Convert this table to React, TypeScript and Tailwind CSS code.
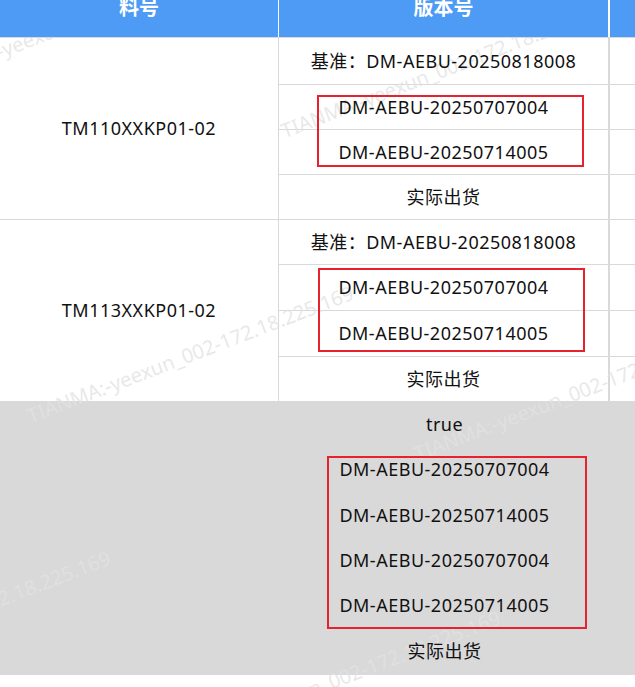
import React from "react";

const WM = "TIANMA:-yeexun_002-172.18.225.169";

function Watermark({ x, y }: { x: number; y: number }) {
  return (
    <span
      className="absolute z-[5] whitespace-nowrap text-[20px] leading-[24px] tracking-normal font-normal text-[rgba(226,226,226,0.79)] origin-left pointer-events-none"
      style={{ left: x, top: y - 12, transform: "rotate(-21deg)" }}
    >
      {WM}
    </span>
  );
}

function Box({ l, t, w, h }: { l: number; t: number; w: number; h: number }) {
  return (
    <div
      className="absolute z-10 border-2 border-[#e8212e] pointer-events-none"
      style={{ left: l, top: t, width: w, height: h }}
    />
  );
}

const T = ({ children }: { children: React.ReactNode }) => (
  <span className="relative z-10 whitespace-nowrap">{children}</span>
);

export default function App() {
  return (
    <div className="relative w-[635px] h-[687px] overflow-hidden bg-white font-['Noto_Sans','Noto_Sans_CJK_SC',sans-serif] text-[18px] tracking-[0.5px] text-[#111]">
      {/* header */}
      <div className="relative z-[6] flex h-[38px] border-b border-[#d9d9d9] bg-[#4e9bf5] text-white font-bold text-[20px] tracking-normal">
        <div className="w-[279px] border-r border-white flex justify-center items-start">
          <span className="-mt-[2px] leading-[20px]">料号</span>
        </div>
        <div className="w-[331px] border-r-2 border-white flex justify-center items-start">
          <span className="-mt-[2px] leading-[20px]">版本号</span>
        </div>
        <div className="flex-1" />
      </div>

      {/* group 1 */}
      <div className="flex">
        <div className="w-[279px] h-[182px] border-r border-b border-[#d9d9d9] flex items-center justify-center">
          <T>TM110XXKP01-02</T>
        </div>
        <div className="relative w-[331px] border-r-2 border-[#d9d9d9] flex flex-col">
          <div className="h-[47px] border-b border-[#d9d9d9] flex items-center justify-center">
            <T>基准：DM-AEBU-20250818008</T>
          </div>
          <div className="h-[45px] border-b border-[#d9d9d9] flex items-center justify-center">
            <T>DM-AEBU-20250707004</T>
          </div>
          <div className="h-[45px] border-b border-[#d9d9d9] flex items-center justify-center">
            <T>DM-AEBU-20250714005</T>
          </div>
          <div className="h-[45px] border-b border-[#d9d9d9] flex items-center justify-center">
            <T>实际出货</T>
          </div>
          <Box l={38} t={57} w={267} h={72} />
        </div>
        <div className="flex-1 flex flex-col">
          <div className="h-[47px] border-b border-[#d9d9d9]" />
          <div className="h-[45px] border-b border-[#d9d9d9]" />
          <div className="h-[45px] border-b border-[#d9d9d9]" />
          <div className="h-[45px] border-b border-[#d9d9d9]" />
        </div>
      </div>

      {/* group 2 */}
      <div className="flex">
        <div className="w-[279px] h-[181px] border-r border-[#d9d9d9] flex items-center justify-center">
          <T>TM113XXKP01-02</T>
        </div>
        <div className="relative w-[331px] border-r-2 border-[#d9d9d9] flex flex-col">
          <div className="h-[45px] border-b border-[#d9d9d9] flex items-center justify-center">
            <T>基准：DM-AEBU-20250818008</T>
          </div>
          <div className="h-[46px] border-b border-[#d9d9d9] flex items-center justify-center">
            <T>DM-AEBU-20250707004</T>
          </div>
          <div className="h-[46px] border-b border-[#d9d9d9] flex items-center justify-center">
            <T>DM-AEBU-20250714005</T>
          </div>
          <div className="h-[44px] flex items-center justify-center">
            <T>实际出货</T>
          </div>
          <Box l={39} t={48} w={267} h={84} />
        </div>
        <div className="flex-1 flex flex-col">
          <div className="h-[45px] border-b border-[#d9d9d9]" />
          <div className="h-[46px] border-b border-[#d9d9d9]" />
          <div className="h-[46px] border-b border-[#d9d9d9]" />
          <div className="h-[44px]" />
        </div>
      </div>

      {/* gray band */}
      <div className="relative h-[274px] bg-[#d9d9d9] flex">
        <div className="w-[279px]" />
        <div className="w-[331px] flex flex-col items-center">
          <div className="h-[46px] flex items-center"><T>true</T></div>
          <div className="h-[45px] flex items-center"><T>DM-AEBU-20250707004</T></div>
          <div className="h-[46px] flex items-center"><T>DM-AEBU-20250714005</T></div>
          <div className="h-[45px] flex items-center"><T>DM-AEBU-20250707004</T></div>
          <div className="h-[45px] flex items-center"><T>DM-AEBU-20250714005</T></div>
          <div className="h-[46px] flex items-center"><T>实际出货</T></div>
        </div>
        <Box l={327} t={55} w={260} h={173} />
      </div>

      {/* watermarks */}
      <Watermark x={-80} y={82} />
      <Watermark x={282} y={132} />
      <Watermark x={-335} y={357} />
      <Watermark x={28} y={417} />
      <Watermark x={415} y={455} />
      <Watermark x={-215} y={682} />
      <Watermark x={175} y={742} />
    </div>
  );
}
